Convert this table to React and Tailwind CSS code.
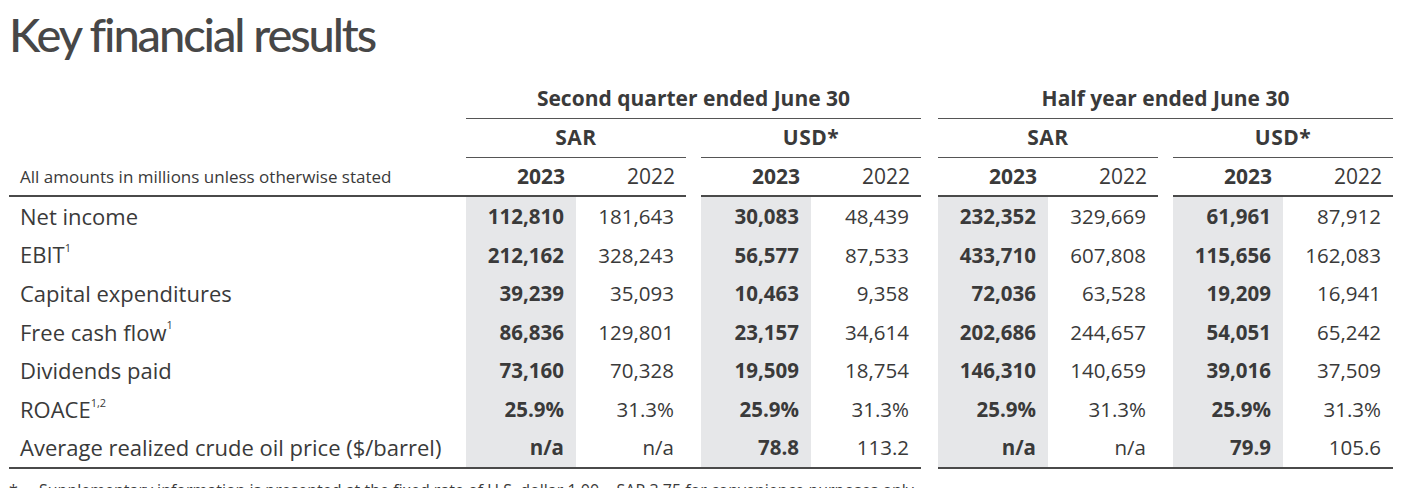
import React from "react";

const rows = [
  { label: "Net income", v: ["112,810", "181,643", "30,083", "48,439", "232,352", "329,669", "61,961", "87,912"] },
  { label: "EBIT", sup: "1", v: ["212,162", "328,243", "56,577", "87,533", "433,710", "607,808", "115,656", "162,083"] },
  { label: "Capital expenditures", v: ["39,239", "35,093", "10,463", "9,358", "72,036", "63,528", "19,209", "16,941"] },
  { label: "Free cash flow", sup: "1", v: ["86,836", "129,801", "23,157", "34,614", "202,686", "244,657", "54,051", "65,242"] },
  { label: "Dividends paid", v: ["73,160", "70,328", "19,509", "18,754", "146,310", "140,659", "39,016", "37,509"] },
  { label: "ROACE", sup: "1,2", v: ["25.9%", "31.3%", "25.9%", "31.3%", "25.9%", "31.3%", "25.9%", "31.3%"] },
  { label: "Average realized crude oil price ($/barrel)", v: ["n/a", "n/a", "78.8", "113.2", "n/a", "n/a", "79.9", "105.6"] },
];

function Pair({ a, b }) {
  return (
    <div className="flex w-[220px] h-full">
      <div className="w-[110px] h-full bg-[#e6e7e9] flex items-center justify-end pr-[12px] font-bold text-[#3a3a3a]">{a}</div>
      <div className="w-[110px] h-full flex items-center justify-end pr-[12px] text-[#3a3a3a]">{b}</div>
    </div>
  );
}

function DataRow({ r }) {
  return (
    <div className="flex h-[38.6px] text-[20.5px]">
      <div className="w-[457px] pl-[11px] flex items-center text-[22px] text-[#3a3a3a] whitespace-nowrap">
        {r.label}
        {r.sup && <sup className="text-[11px] top-[-0.6em]">{r.sup}</sup>}
      </div>
      <div className="flex w-[455px] gap-[15px]">
        <Pair a={r.v[0]} b={r.v[1]} />
        <Pair a={r.v[2]} b={r.v[3]} />
      </div>
      <div className="w-[17px]" />
      <div className="flex w-[455px] gap-[15px]">
        <Pair a={r.v[4]} b={r.v[5]} />
        <Pair a={r.v[6]} b={r.v[7]} />
      </div>
    </div>
  );
}

function YearHead() {
  return (
    <div className="flex w-[220px] h-full border-b-2 border-[#4a4a4a]">
      <div className="w-[110px] flex items-center justify-end pr-[11px] font-bold">2023</div>
      <div className="w-[110px] flex items-center justify-end pr-[11px]">2022</div>
    </div>
  );
}

export default function App() {
  return (
    <div className="w-[1412px] h-[488px] overflow-hidden bg-white text-[#3a3a3a] font-['Open_Sans',sans-serif]">
      <div className="h-[58px] pt-[11px] pl-[9px]">
        <h1 className="font-['Lato',sans-serif] font-medium text-[47px] leading-none tracking-[-2.1px] text-[#474747]">Key financial results</h1>
      </div>
      <div className="mt-[22px] pl-[9px]">
        {/* header row 1 */}
        <div className="flex h-[39px] text-[21px] font-bold">
          <div className="w-[457px]" />
          <div className="w-[455px] flex items-center justify-center border-b border-[#555]">Second quarter ended June 30</div>
          <div className="w-[17px]" />
          <div className="w-[455px] flex items-center justify-center border-b border-[#555]">Half year ended June 30</div>
        </div>
        {/* header row 2 */}
        <div className="flex h-[39px] text-[21px] font-bold tracking-[0.5px]">
          <div className="w-[457px]" />
          <div className="flex w-[455px] gap-[15px]">
            <div className="w-[220px] flex items-center justify-center border-b border-[#555]">SAR</div>
            <div className="w-[220px] flex items-center justify-center border-b border-[#555]">USD*</div>
          </div>
          <div className="w-[17px]" />
          <div className="flex w-[455px] gap-[15px]">
            <div className="w-[220px] flex items-center justify-center border-b border-[#555]">SAR</div>
            <div className="w-[220px] flex items-center justify-center border-b border-[#555]">USD*</div>
          </div>
        </div>
        {/* header row 3 */}
        <div className="flex h-[39px] text-[21px]">
          <div className="w-[457px] pl-[11px] flex items-center text-[17px] border-b-2 border-[#4a4a4a]">All amounts in millions unless otherwise stated</div>
          <div className="flex w-[455px] gap-[15px]">
            <YearHead />
            <YearHead />
          </div>
          <div className="w-[17px]" />
          <div className="flex w-[455px] gap-[15px]">
            <YearHead />
            <YearHead />
          </div>
        </div>
        {rows.map((r) => (
          <DataRow key={r.label} r={r} />
        ))}
        <div className="flex">
          <div className="w-[912px] h-[2px] bg-[#4a4a4a]" />
          <div className="w-[17px]" />
          <div className="w-[455px] h-[2px] bg-[#4a4a4a]" />
        </div>
        <p className="mt-[9px] text-[16px] leading-[24px] whitespace-nowrap">
          <span className="inline-block w-[30px]">*</span>Supplementary information is presented at the fixed rate of U.S. dollar 1.00 = SAR 3.75 for convenience purposes only.
        </p>
      </div>
    </div>
  );
}
